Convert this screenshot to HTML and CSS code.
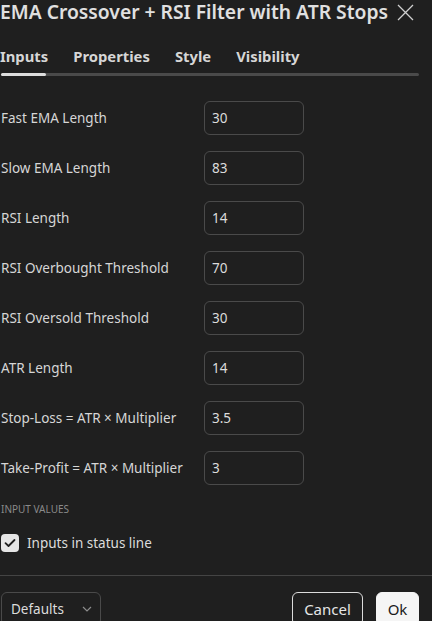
FILE: index.html
```html
<!DOCTYPE html>
<html lang="en">
<head>
<meta charset="utf-8">
<title>EMA Crossover + RSI Filter with ATR Stops</title>
<link rel="stylesheet" href="styles.css">
</head>
<body>
<div class="dialog">
  <header class="header">
    <h1 class="title">EMA Crossover + RSI Filter with ATR Stops</h1>
    <button class="close" aria-label="Close">
      <svg width="17" height="17" viewBox="0 0 17 17"><path d="M1 1L16 16M16 1L1 16" stroke="#cfcfcf" stroke-width="1.3" fill="none"/></svg>
    </button>
  </header>
  <nav class="tabs">
    <span class="tab active">Inputs</span>
    <span class="tab">Properties</span>
    <span class="tab">Style</span>
    <span class="tab">Visibility</span>
  </nav>
  <div class="tabbar"><div class="tabbar-active"></div></div>

  <div class="rows">
    <div class="row"><span class="label">Fast EMA Length</span><div class="field">30</div></div>
    <div class="row"><span class="label">Slow EMA Length</span><div class="field">83</div></div>
    <div class="row"><span class="label">RSI Length</span><div class="field">14</div></div>
    <div class="row"><span class="label">RSI Overbought Threshold</span><div class="field">70</div></div>
    <div class="row"><span class="label">RSI Oversold Threshold</span><div class="field">30</div></div>
    <div class="row"><span class="label">ATR Length</span><div class="field">14</div></div>
    <div class="row"><span class="label">Stop-Loss = ATR × Multiplier</span><div class="field">3.5</div></div>
    <div class="row"><span class="label">Take-Profit = ATR × Multiplier</span><div class="field">3</div></div>
  </div>

  <div class="section-title">INPUT VALUES</div>
  <label class="check-row">
    <span class="checkbox">
      <svg width="12" height="10" viewBox="0 0 12 10"><path d="M1.5 5.2L4.5 8L10.5 2" stroke="#1f1f1f" stroke-width="1.8" fill="none" stroke-linecap="round" stroke-linejoin="round"/></svg>
    </span>
    <span class="check-label">Inputs in status line</span>
  </label>

  <div class="divider"></div>

  <footer class="footer">
    <div class="select">
      <span>Defaults</span>
      <svg width="10" height="6" viewBox="0 0 10 6"><path d="M1 1L5 5L9 1" stroke="#8c8c8c" stroke-width="1.2" fill="none"/></svg>
    </div>
    <div class="actions">
      <button class="btn btn-cancel">Cancel</button>
      <button class="btn btn-ok">Ok</button>
    </div>
  </footer>
</div>
</body>
</html>
```
FILE: styles.css
```css
html, body {
  margin: 0;
  padding: 0;
  background: #1f1f1f;
  overflow: hidden;
}
body {
  font-family: "Noto Sans", "DejaVu Sans", sans-serif;
  color: #dbdbdb;
}
.dialog {
  width: 432px;
  height: 621px;
}
.header {
  display: flex;
  align-items: center;
  height: 24px;
}
.title {
  margin: 0;
  flex-shrink: 0;
  font-size: 19.3px;
  font-weight: 600;
  line-height: 24px;
  white-space: nowrap;
  color: #e0e0e0;
}
.close {
  margin-left: 9px;
  padding: 0;
  border: 0;
  background: none;
  display: flex;
  flex-shrink: 0;
}
.tabs {
  display: flex;
  gap: 25px;
  margin-top: 20px;
  height: 24px;
  align-items: center;
}
.tab {
  font-size: 14.8px;
  font-weight: 700;
  line-height: 24px;
  color: #d6d6d6;
}
.tabbar {
  margin-top: 5px;
  width: 418px;
  margin-left: 1px;
  height: 3px;
  border-radius: 2px;
  background: #4a4a4a;
}
.tabbar-active {
  width: 45px;
  height: 3px;
  border-radius: 2px;
  background: #dcdcdc;
}
.rows {
  margin-top: 25px;
  padding-left: 1px;
  display: flex;
  flex-direction: column;
  gap: 16px;
}
.row {
  display: grid;
  grid-template-columns: 203px 100px;
  align-items: center;
  height: 34px;
}
.label {
  font-size: 13.5px;
  color: #d6d6d6;
  white-space: nowrap;
}
.field {
  box-sizing: border-box;
  height: 34px;
  border: 1px solid #4a4a4a;
  border-radius: 6px;
  padding-left: 7px;
  font-size: 13.5px;
  line-height: 32px;
  color: #dcdcdc;
}
.section-title {
  margin-top: 17px;
  margin-left: 1px;
  font-size: 10px;
  line-height: 14px;
  color: #8a8a8a;
}
.check-row {
  margin-top: 17px;
  display: flex;
  align-items: center;
  gap: 8px;
  padding-left: 1px;
  height: 19px;
}
.checkbox {
  width: 18px;
  height: 18px;
  border-radius: 4px;
  background: #e6e6e6;
  display: flex;
  align-items: center;
  justify-content: center;
}
.check-label {
  font-size: 13.5px;
  color: #dcdcdc;
}
.divider {
  margin-top: 23px;
  height: 1px;
  background: #444;
}
.footer {
  margin-top: 16px;
  display: flex;
  justify-content: space-between;
  padding: 0 13px 0 1px;
}
.select {
  box-sizing: border-box;
  width: 100px;
  height: 34px;
  border: 1px solid #4a4a4a;
  border-radius: 6px;
  display: flex;
  align-items: center;
  justify-content: space-between;
  padding: 0 8px 0 9px;
  font-size: 13.5px;
  color: #dcdcdc;
}
.actions {
  display: flex;
  gap: 13px;
}
.btn {
  box-sizing: border-box;
  height: 34px;
  border-radius: 6px;
  font-family: inherit;
  font-size: 15px;
  padding: 0;
}
.btn-cancel {
  width: 71px;
  background: transparent;
  border: 1px solid #dcdcdc;
  color: #e6e6e6;
}
.btn-ok {
  width: 43px;
  background: #f5f5f5;
  border: 1px solid #f5f5f5;
  color: #1a1a1a;
}
```
